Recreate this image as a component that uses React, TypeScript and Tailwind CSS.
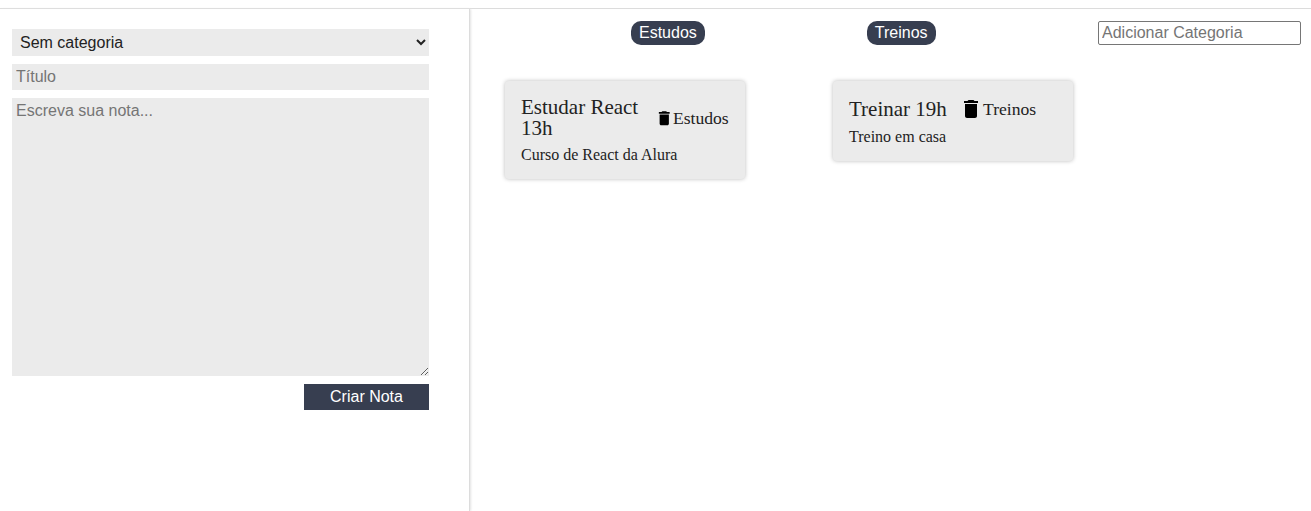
import React from "react";

function TrashIcon({ className }: { className: string }) {
  return (
    <svg className={className} viewBox="0 0 24 24" fill="currentColor">
      <path d="M6 19c0 1.100.9 2 2 2h8c1.100 0 2-.9 2-2V7H6v12zM19 4h-3.500l-1-1h-5l-1 1H5v2h14V4z" />
    </svg>
  );
}

const categories = ["Estudos", "Treinos"];

export default function App() {
  return (
    <div className="flex h-[511px] flex-col overflow-hidden bg-white font-['Liberation_Sans',sans-serif] text-base text-black">
      <div className="h-[9px] shrink-0 border-b border-[#dcdcdc]" />
      <main className="flex flex-1">
        <form className="flex w-[470px] shrink-0 flex-col gap-2 border-r border-[#dcdcdc] pl-3 pr-10 pt-5 shadow-[1px_0_2px_#e4e4e4]">
          <select className="h-[27px] w-full rounded-none bg-[#ebebeb] px-1 text-[#222] outline-none">
            <option>Sem categoria</option>
          </select>
          <input className="h-[26px] w-full bg-[#ebebeb] px-1 outline-none placeholder:text-[#757575]" placeholder="Título" />
          <textarea className="block h-[278px] w-full resize bg-[#ebebeb] px-1 pt-0.5 leading-[22px] outline-none placeholder:text-[#757575]" placeholder="Escreva sua nota..." />
          <button type="button" className="h-[26px] w-[125px] self-end bg-[#373e50] text-white">Criar Nota</button>
        </form>
        <section className="min-w-0 flex-1">
          <header className="flex pt-3">
            <ul className="flex w-[628px] pl-[161px]">
              {categories.map((name) => (
                <li key={name} className="mr-[162px] h-6 shrink-0 rounded-[10px] bg-[#373e50] px-2 leading-6 text-white">{name}</li>
              ))}
            </ul>
            <input className="h-6 w-[203px] shrink-0 rounded-[2px] border border-[#767676] px-[3px] outline-none placeholder:text-[#757575]" placeholder="Adicionar Categoria" />
          </header>
          <div className="flex items-start gap-[88px] pl-[35px] pt-9 font-['Liberation_Serif',serif] text-[#222]">
            <article className="h-[98px] w-[240px] rounded-[4px] bg-[#ebebeb] px-4 pt-4 shadow-[0_0_4px_#bbb]">
              <header className="flex items-center">
                <h3 className="w-[133.500px] shrink-0 pr-3 text-[21px] leading-[21px]">Estudar React 13h</h3>
                <TrashIcon className="size-[18.5px] shrink-0 text-black" />
                <h4 className="text-[17.6px]">Estudos</h4>
              </header>
              <p className="mt-[7px] text-base leading-[18px]">Curso de React da Alura</p>
            </article>
            <article className="h-[80px] w-[240px] rounded-[4px] bg-[#ebebeb] px-4 pt-4 shadow-[0_0_4px_#bbb]">
              <header className="flex h-6 items-center">
                <h3 className="w-[110px] text-[21px] leading-6">Treinar 19h</h3>
                <TrashIcon className="size-6 shrink-0 text-black" />
                <h4 className="text-[17.6px]">Treinos</h4>
              </header>
              <p className="mt-[7px] text-base leading-[18px]">Treino em casa</p>
            </article>
          </div>
        </section>
      </main>
    </div>
  );
}
